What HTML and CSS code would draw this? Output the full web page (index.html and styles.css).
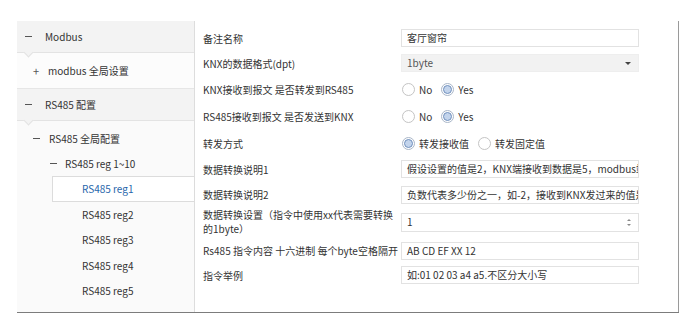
FILE: index.html
```html
<!DOCTYPE html>
<html lang="zh-CN">
<head>
<meta charset="utf-8">
<title>RS485 reg1</title>
<link rel="stylesheet" href="styles.css">
</head>
<body>
<div class="frame">
  <aside class="tree">
    <div class="hdr"><span class="tg"><i class="minus"></i></span><span>Modbus</span></div>
    <div class="sub"><span class="tg plus">+</span><span>modbus 全局设置</span></div>
    <div class="hdr"><span class="tg"><i class="minus"></i></span><span>RS485 配置</span></div>
    <ul class="nodes">
      <li class="node l1"><span class="tg"><i class="minus"></i></span>RS485 全局配置</li>
      <li class="node l2"><span class="tg"><i class="minus"></i></span>RS485 reg 1~10</li>
      <li class="node leaf sel">RS485 reg1</li>
      <li class="node leaf">RS485 reg2</li>
      <li class="node leaf">RS485 reg3</li>
      <li class="node leaf">RS485 reg4</li>
      <li class="node leaf">RS485 reg5</li>
    </ul>
  </aside>
  <main class="form">
    <div class="lbl">备注名称</div>
    <div class="field">客厅窗帘</div>

    <div class="lbl">KNX的数据格式(dpt)</div>
    <div class="field select"><span>1byte</span><i class="caret"></i></div>

    <div class="lbl">KNX接收到报文 是否转发到RS485</div>
    <div class="radios">
      <span class="radio"></span><span class="rtext">No</span>
      <span class="radio on"></span><span class="rtext">Yes</span>
    </div>

    <div class="lbl">RS485接收到报文 是否发送到KNX</div>
    <div class="radios">
      <span class="radio"></span><span class="rtext">No</span>
      <span class="radio on"></span><span class="rtext">Yes</span>
    </div>

    <div class="lbl">转发方式</div>
    <div class="radios">
      <span class="radio on"></span><span class="rtext">转发接收值</span>
      <span class="radio"></span><span class="rtext">转发固定值</span>
    </div>

    <div class="lbl">数据转换说明1</div>
    <div class="field">假设设置的值是2，KNX端接收到数据是5，modbus端发送的数据是10</div>

    <div class="lbl">数据转换说明2</div>
    <div class="field">负数代表多少份之一，如-2，接收到KNX发过来的值是10，则发送5</div>

    <div class="lbl two">数据转换设置（指令中使用xx代表需要转换<br>的1byte）</div>
    <div class="field number"><span>1</span><span class="spin"><i class="up"></i><i class="down"></i></span></div>

    <div class="lbl">Rs485 指令内容 十六进制 每个byte空格隔开</div>
    <div class="field">AB CD EF XX 12</div>

    <div class="lbl">指令举例</div>
    <div class="field">如:01 02 03 a4 a5.不区分大小写</div>
  </main>
</div>
</body>
</html>
```

FILE: styles.css
```css
* { box-sizing: border-box; }
html, body { margin: 0; padding: 0; background: #ffffff; }
body {
  font-family: "Noto Sans CJK SC", "Noto Sans", sans-serif;
  font-size: 10px;
  color: #333333;
}
.frame {
  display: flex;
  margin: 21px 0 0 17px;
  width: 662px;
  height: 292px;
  border-bottom: 1px solid #7c7c7c;
}

/* tree */
.tree {
  width: 177px;
  flex: none;
  background: #fafafa;
  display: flex;
  flex-direction: column;
}
.hdr {
  position: relative;
  height: 32px;
  display: flex;
  align-items: center;
  padding-left: 8px;
  background: #f3f3f3;
  border-bottom: 1px solid #e3e3e3;
}
.hdr::after {
  content: "";
  position: absolute;
  left: 8px;
  bottom: -4px;
  width: 6px;
  height: 6px;
  background: #f3f3f3;
  border-right: 1px solid #e3e3e3;
  border-bottom: 1px solid #e3e3e3;
  transform: rotate(45deg);
}
.tg {
  width: 20px;
  flex: none;
  display: flex;
  align-items: center;
}
.minus {
  display: block;
  width: 7px;
  height: 1px;
  background: #555555;
}
.plus { color: #555555; font-size: 11px; }
.sub {
  height: 36px;
  display: flex;
  align-items: center;
  padding-left: 16px;
  background: #fcfcfc;
  border-bottom: 1px solid #e6e6e6;
}
.sub .tg { width: 15px; }
.nodes {
  list-style: none;
  margin: 0;
  padding: 5px 0 0 0;
}
.node {
  display: flex;
  align-items: center;
  height: 25px;
}
.l1 { padding-left: 16px; }
.l1 .tg { width: 16px; }
.l2 { padding-left: 33px; }
.l2 .tg { width: 15px; }
.leaf {
  height: 25.5px;
  margin-left: 35px;
  padding-left: 30px;
}
.sel {
  margin-right: -1px;
  padding-left: 29px;
  background: #ffffff;
  border: 1px solid #dcdcdc;
  color: #1f66ab;
  position: relative;
}

/* form */
.form {
  flex: 1;
  border-left: 1px solid #dddddd;
  border-right: 1px solid #9a9a9a;
  padding: 5px 0 0 8px;
  display: grid;
  grid-template-columns: 198px 238px;
  grid-template-rows: 24px 26px 26px 28px 26px 26px 25px 30px 27px 22px;
  align-content: start;
  align-items: center;
}
.lbl { white-space: nowrap; color: #333333; }
.lbl.two { line-height: 14px; }
.field {
  height: 18px;
  border: 1px solid #e2e2e2;
  background: #ffffff;
  padding: 0 5px;
  line-height: 16px;
  white-space: nowrap;
  overflow: hidden;
  color: #333333;
}
.select {
  display: flex;
  align-items: center;
  justify-content: space-between;
  background: #f2f2f2;
  border-color: #eeeeee;
  color: #555555;
}
.caret {
  width: 0;
  height: 0;
  border-left: 3px solid transparent;
  border-right: 3px solid transparent;
  border-top: 3px solid #444444;
  margin-right: 2px;
}
.number {
  height: 19px;
  display: flex;
  align-items: center;
  justify-content: space-between;
}
.spin {
  display: flex;
  flex-direction: column;
  gap: 3px;
  margin-right: 2px;
}
.spin i {
  display: block;
  width: 0;
  height: 0;
  border-left: 2px solid transparent;
  border-right: 2px solid transparent;
}
.spin .up { border-bottom: 2px solid #8a8a8a; }
.spin .down { border-top: 2px solid #8a8a8a; }
.radios {
  display: flex;
  align-items: center;
  padding-left: 1px;
}
.radio {
  width: 13px;
  height: 13px;
  border-radius: 50%;
  border: 1px solid #c4c4c4;
  background: #ffffff;
  display: flex;
  align-items: center;
  justify-content: center;
  flex: none;
}
.radio.on { border-color: #a9b6c8; }
.radio.on::before {
  content: "";
  width: 7px;
  height: 7px;
  border-radius: 50%;
  background: #c3d4ec;
  border: 1px solid #6f8fbd;
}
.rtext { margin: 0 9px 0 4px; }
```
